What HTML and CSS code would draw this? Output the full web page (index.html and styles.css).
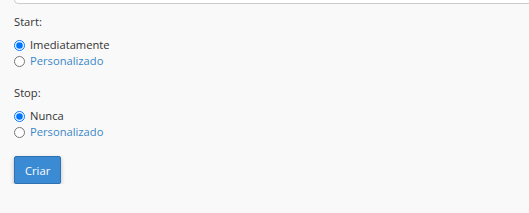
FILE: index.html
```html
<!DOCTYPE html>
<html lang="en">
<head>
    <meta charset="UTF-8">
    <title>Agendamento</title>
    <link rel="stylesheet" href="styles.css">
</head>
<body>
    <div class="container">
        <div class="top-field"></div>
        <div class="group">
            <div class="label">Start:</div>
            <label class="option"><input type="radio" name="start" checked> <span>Imediatamente</span></label>
            <label class="option"><input type="radio" name="start"> <a href="#">Personalizado</a></label>
        </div>
        <div class="group">
            <div class="label">Stop:</div>
            <label class="option"><input type="radio" name="stop" checked> <span>Nunca</span></label>
            <label class="option"><input type="radio" name="stop"> <a href="#">Personalizado</a></label>
        </div>
        <button class="btn-primary">Criar</button>
    </div>
</body>
</html>
```

FILE: styles.css
```css
body {
    font-family: 'Open Sans', Arial, sans-serif;
    font-size: 11.2px;
    background: #f9f9f9;
    margin: 0;
    padding: 0;
    color: #333;
}
.container {
    padding: 0 0 0 14px;
}
.top-field {
    height: 30px;
    margin-top: -28px;
    margin-right: -10px;
    border: 1px solid #ccc;
    border-radius: 4px;
    background: #fff;
    margin-bottom: 10px;
}
.group {
    margin-bottom: 16px;
}
.group + .group {
    margin-bottom: 16px;
}
.label {
    line-height: 16px;
    margin-bottom: 7px;
}
.option {
    display: flex;
    align-items: center;
    line-height: 16px;
    height: 16px;
}
.option input {
    margin: 0 5px 0 0;
    width: 11px;
    height: 11px;
}
.option a {
    color: #3a87c8;
    text-decoration: none;
}
.btn-primary {
    font-family: inherit;
    font-size: 11.2px;
    color: #fff;
    background: #3b8bd4;
    border: 1px solid #2f72b2;
    border-radius: 2px;
    padding: 0 10px;
    height: 28px;
    box-shadow: 0 2px 4px rgba(0,0,0,0.25);
    cursor: pointer;
}
```
